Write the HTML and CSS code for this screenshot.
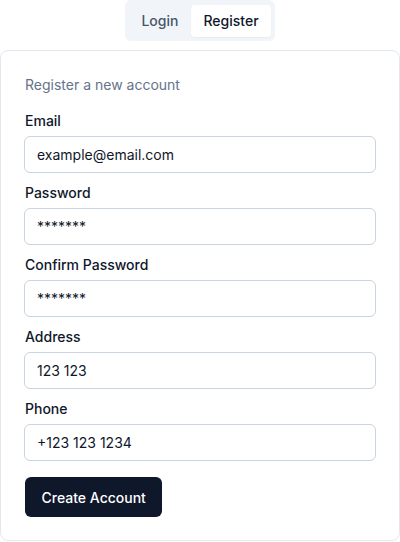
FILE: index.html
```html
<!DOCTYPE html>
<html lang="en">
<head>
<meta charset="utf-8">
<title>Register</title>
<link rel="stylesheet" href="styles.css">
</head>
<body>
<div class="page">
  <div class="tabs">
    <div class="tabs-list">
      <button class="tab">Login</button>
      <button class="tab active">Register</button>
    </div>
  </div>
  <div class="card">
    <p class="desc">Register a new account</p>
    <form class="form">
      <div class="field">
        <label class="label">Email</label>
        <input class="input" type="text" value="example@email.com">
      </div>
      <div class="field">
        <label class="label">Password</label>
        <input class="input" type="text" value="*******">
      </div>
      <div class="field">
        <label class="label">Confirm Password</label>
        <input class="input" type="text" value="*******">
      </div>
      <div class="field">
        <label class="label">Address</label>
        <input class="input" type="text" value="123 123">
      </div>
      <div class="field">
        <label class="label">Phone</label>
        <input class="input" type="text" value="+123 123 1234">
      </div>
      <div class="actions">
        <button type="button" class="btn">Create Account</button>
      </div>
    </form>
  </div>
</div>
</body>
</html>
```
FILE: styles.css
```css
* { box-sizing: border-box; }
html, body { margin: 0; padding: 0; background: #ffffff; }
body {
  font-family: Inter, "Noto Sans", sans-serif;
  color: #0f172a;
  font-size: 14px;
  line-height: 20px;
}
.page {
  width: 400px;
  display: flex;
  flex-direction: column;
}
.tabs {
  display: flex;
  justify-content: center;
  margin-bottom: 9px;
}
.tabs-list {
  display: inline-flex;
  align-items: center;
  height: 41px;
  padding: 5px 4px 4px;
  background: #f1f5f9;
  border-radius: 6px;
}
.tab {
  font-family: inherit;
  font-size: 14px;
  font-weight: 500;
  line-height: 20px;
  height: 32px;
  padding: 0 12.5px;
  border: 0;
  border-radius: 4px;
  background: transparent;
  color: #475569;
  cursor: pointer;
}
.tab.active {
  background: #ffffff;
  color: #0f172a;
  box-shadow: 0 1px 2px rgba(15, 23, 42, 0.04);
}
.card {
  border: 1px solid #e2e8f0;
  border-radius: 8px;
  padding: 24px 24px 23px;
  background: #ffffff;
}
.desc {
  margin: 0 0 16px;
  color: #64748b;
  font-size: 14px;
  line-height: 20px;
}
.form {
  display: flex;
  flex-direction: column;
  gap: 10px;
}
.field {
  display: flex;
  flex-direction: column;
  gap: 5px;
}
.label {
  font-size: 14px;
  font-weight: 500;
  line-height: 20px;
  color: #0f172a;
}
.input {
  height: 37px;
  width: calc(100% + 2px);
  margin-left: -1px;
  padding: 0 12px;
  border: 1px solid #cbd5e1;
  border-radius: 6px;
  font-family: inherit;
  font-size: 14px;
  color: #0f172a;
  background: #ffffff;
  outline: none;
}
.actions {
  padding-top: 6px;
}
.btn {
  height: 40px;
  padding: 0 16.5px;
  border: 0;
  border-radius: 6px;
  background: #0f172a;
  color: #ffffff;
  font-family: inherit;
  font-size: 14px;
  font-weight: 500;
  cursor: pointer;
}
```
